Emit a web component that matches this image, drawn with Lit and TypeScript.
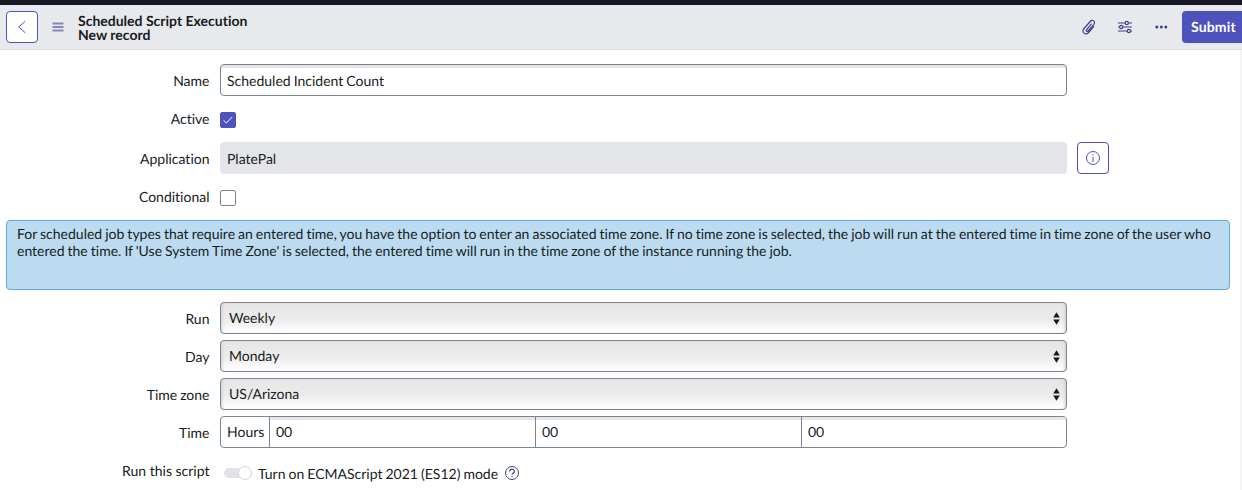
import { LitElement, html, css } from "lit";
import { customElement, property } from "lit/decorators.js";

@customElement("select-box")
class SelectBox extends LitElement {
  @property() value = "";
  static styles = css`
    :host {
      display: flex;
      box-sizing: border-box;
      justify-content: space-between;
      align-items: center;
      width: 847px;
      height: 32px;
      padding: 0 6px 0 8px;
      border: 1px solid #7c8491;
      border-radius: 4px;
      background: linear-gradient(#e5e5e5, #ececec 55%, #fefefe 95%);
      box-shadow: inset 3px 0 3px -2px #ccc, inset -3px 0 3px -2px #ccc;
    }
    .value { line-height: 18px; }
    svg { display: block; }
  `;
  render() {
    return html`<span class="value">${this.value}</span>
      <svg width="7" height="13" viewBox="0 0 7 13" fill="#161b1c"><path d="M3.5 .3 6.8 5.5H.2zM.2 7.6h6.6L3.5 12.8z" /></svg>`;
  }
}

@customElement("app-root")
class AppRoot extends LitElement {
  static styles = css`
    :host {
      display: block;
      box-sizing: border-box;
      width: 1242px;
      height: 490px;
      overflow: hidden;
      background: #fff;
      color: #161b1c;
      font: 14px/18px Lato, "Liberation Sans", sans-serif;
      font-variant-ligatures: none;
      text-rendering: geometricPrecision;
      word-spacing: -0.57px;
    }
    svg { display: block; fill: none; }
    header {
      display: flex;
      align-items: center;
      box-sizing: border-box;
      height: 50px;
      padding: 0 0 0 6px;
      border-top: 5px solid #181825;
      border-bottom: 1px solid #dcdde1;
      background: #e8e9ed;
      color: #3d3d8f;
    }
    .square {
      display: flex;
      align-items: center;
      justify-content: center;
      box-sizing: border-box;
      width: 32px;
      height: 32px;
      border: 1px solid #4f52bd;
      border-radius: 4px;
      background: #fff;
      color: #4f52bd;
    }
    .menu { margin: 0 0 0 14px; }
    .title {
      flex: 1;
      margin: 1px 0 0 14px;
      color: #161b1c;
      font-weight: 700;
      line-height: 14px;
      word-spacing: 0;
    }
    .tools { display: flex; align-items: center; gap: 20px; margin-right: 13px; }
    .submit {
      box-sizing: border-box;
      width: 60px;
      height: 32px;
      padding-left: 9px;
      border-radius: 4px 0 0 4px;
      background: #4f52bd;
      color: #fff;
      font-weight: 700;
      letter-spacing: 0.15px;
      line-height: 32px;
    }
    .body { height: 440px; box-sizing: border-box; border-right: 2px solid #f5f5f6; padding-top: 14px; }
    .row { display: flex; align-items: center; height: 32px; margin-bottom: 6px; }
    .label { width: 209.5px; margin-right: 10.5px; padding-top: 2px; text-align: right; }
    .tick .label { padding: 0 0 2px; }
    .field {
      box-sizing: border-box;
      width: 847px;
      height: 32px;
      padding-left: 6px;
      border: 1px solid #7c8491;
      border-radius: 4px;
      line-height: 31px;
      box-shadow: inset 0 3px 0 #e6e6e9;
    }
    .readonly { background: #e4e5e9; border-color: #e4e5e9; box-shadow: none; }
    .row .square { margin-left: 10px; }
    .tick { height: 16px; margin: 16px 0 14px; }
    .check { box-sizing: border-box; width: 16px; height: 16px; border: 1px solid #7c8491; border-radius: 2px; }
    .checked { border-color: #4f52bd; background: #4f52bd; }
    .banner {
      box-sizing: border-box;
      width: 1224px;
      height: 70px;
      margin: 0 0 12px 6px;
      padding: 4px 10px;
      border: 1px solid #5dacdf;
      border-radius: 4px;
      background: #bddbf0;
      line-height: 17px;
      white-space: nowrap;
    }
    .time { display: grid; grid-template-columns: 48px 266px 266px 1fr; padding: 0; box-shadow: none; overflow: hidden; line-height: 30px; }
    .unit { padding-left: 6px; }
    .part { padding-left: 6px; border-left: 1px solid #7c8491; box-shadow: inset 0 3px 0 #e6e6e9; }
    .script { height: 20px; margin-top: 15px; }
    .script .label { padding: 0 0 4px; word-spacing: 0; }
    .toggle { display: flex; justify-content: flex-end; align-items: center; width: 27.5px; height: 10px; margin: 0 6.5px 0 4px; border-radius: 5px; background: #e2e3e8; }
    .knob { box-sizing: border-box; width: 14px; height: 14px; border: 1px solid #d5d6de; border-radius: 50%; background: #fff; }
    .mode { padding-top: 2px; margin-right: 6px; }
  `;

  private row(label: string, content: unknown, extra = "") {
    return html`<div class="row ${extra}"><div class="label">${label}</div>${content}</div>`;
  }

  render() {
    return html`
      <header>
        <div class="square"><svg width="16" height="16" stroke="currentColor"><path d="M11.3 2.2 4.7 8l6.6 5.8" /></svg></div>
        <svg class="menu" width="12" height="10" stroke="#8486b6" stroke-width="2"><path d="M.5 1.5h11M.5 5h11M.5 8.5h11" /></svg>
        <div class="title"><div>Scheduled Script Execution</div><div>New record</div></div>
        <div class="tools">
          <svg width="16" height="16" viewBox="0 0 16 16" stroke="currentColor" stroke-width="1.15" stroke-linecap="round" stroke-linejoin="round"><path d="M10.3 5.2 5.6 10.7c-1 1.2.5 2.4 1.5 1.3l5.6-6.4c2.5-3-1.1-5.8-3.5-3.1L3 9.5c-3 3.5 1.5 7.4 4.6 4l5.1-5.8" /></svg>
          <svg width="16" height="16" viewBox="0 0 16 16" stroke="currentColor" stroke-width="1.15"><path d="M1 4h7.2M11.8 4H15M1 8h1.2M5.8 8H15M1 12h9.2M13.8 12H15" /><circle cx="9.8" cy="4" r="1.6" /><circle cx="4.2" cy="8" r="1.6" /><circle cx="11.9" cy="12" r="1.6" /></svg>
          <svg width="16" height="16" viewBox="0 0 16 16"><g fill="currentColor"><circle cx="3.8" cy="8" r="1.5" /><circle cx="8.3" cy="8" r="1.5" /><circle cx="12.8" cy="8" r="1.5" /></g></svg>
        </div>
        <div class="submit">Submit</div>
      </header>
      <div class="body">
        ${this.row("Name", html`<div class="field">Scheduled Incident Count</div>`)}
        ${this.row("Active", html`<div class="check checked"><svg width="14" height="14" stroke="#fff"><path d="m2.5 7.3 2.8 2.7 6-6.2" /></svg></div>`, "tick")}
        ${this.row("Application", html`<div class="field readonly">PlatePal</div>
          <div class="square"><svg width="16" height="16" stroke="currentColor"><circle cx="8" cy="8" r="6.5" /><path d="M8 7v5M8 4.3v1.2" /></svg></div>`)}
        ${this.row("Conditional", html`<div class="check"></div>`, "tick")}
        <div class="banner">For scheduled job types that require an entered time, you have the option to enter an associated time zone. If no time zone is selected, the job will run at the entered time in time zone of the user who<br />entered the time. If 'Use System Time Zone' is selected, the entered time will run in the time zone of the instance running the job.</div>
        ${this.row("Run", html`<select-box value="Weekly"></select-box>`)}
        ${this.row("Day", html`<select-box value="Monday"></select-box>`)}
        ${this.row("Time zone", html`<select-box value="US/Arizona"></select-box>`)}
        ${this.row("Time", html`<div class="field time"><div class="unit">Hours</div><div class="part">00</div><div class="part">00</div><div class="part">00</div></div>`)}
        ${this.row("Run this script", html`<div class="toggle"><div class="knob"></div></div><div class="mode">Turn on ECMAScript 2021 (ES12) mode</div>
          <svg width="16" height="16" stroke="#3d3d8f"><circle cx="8" cy="8" r="6.5" /><path d="M5.7 6.4c0-3.1 4.7-3 4.7-.2C10.4 8 8 7.8 8 9.8M8 10.9V12" stroke-width="1.2" /></svg>`, "script")}
      </div>`;
  }
}
